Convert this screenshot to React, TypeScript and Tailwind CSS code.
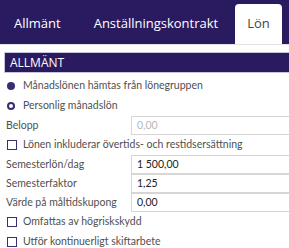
import { useState } from 'react';

const font = { fontFamily: '"Open Sans", "Noto Sans", sans-serif' };
const bodyFont = { fontFamily: 'Lato, "Open Sans", sans-serif' };

function Radio({ checked, label }: { checked: boolean; label: string }) {
  return (
    <div className="flex items-center h-[20px] pl-[7px] gap-[8px] whitespace-nowrap">
      {checked ? (
        <span className="shrink-0 w-[8px] h-[8px] rounded-full bg-[#3b2d72]" />
      ) : (
        <span className="shrink-0 w-[8px] h-[8px] rounded-full border-2 border-[#3b2d72]" />
      )}
      <span className="text-[10.5px] text-[#505050]">{label}</span>
    </div>
  );
}

function Check({ label }: { label: string }) {
  return (
    <div className="flex items-center h-[20px] pl-[7px] gap-[6px] whitespace-nowrap">
      <span className="shrink-0 w-[10px] h-[10px] border-[1.5px] border-[#3b2d72] bg-white" />
      <span className="text-[10.5px] text-[#505050]">{label}</span>
    </div>
  );
}

function Field({ label, value, disabled }: { label: string; value: string; disabled?: boolean }) {
  return (
    <div className="flex items-center h-[19px] whitespace-nowrap">
      <span className="w-[131px] shrink-0 pl-[6px] text-[10.5px] text-[#505050]">{label}</span>
      <div
        className={`w-[170px] shrink-0 h-[19px] border border-[#d6d6d6] flex items-center pl-[5px] text-[10.5px] ${
          disabled ? 'text-[#b8b8b8]' : 'text-[#222]'
        }`}
      >
        {value}
      </div>
    </div>
  );
}

export default function App() {
  const [tab] = useState('Lön');

  return (
    <div className="w-[289px] h-[248px] overflow-hidden bg-white" style={font}>
      <div className="h-[44px] bg-[#2a1b60] flex items-end whitespace-nowrap">
        <div className="h-[40px] flex items-center text-[13px] text-white pl-[14px]">Allmänt</div>
        <div className="h-[40px] flex items-center text-[13px] text-white ml-[33px]">Anställningskontrakt</div>
        <div
          className={`h-[40px] w-[47px] ml-auto mr-[7px] flex items-center justify-center text-[13px] rounded-t-[4px] ${
            tab === 'Lön' ? 'bg-white text-[#444]' : 'text-white'
          }`}
        >
          Lön
        </div>
      </div>
      <div className="h-[1px] bg-[#e2e2e2]" />
      <div className="mt-[7px] ml-[4px] border-l border-t border-[#c9c4dc]">
        <div className="h-[20px] bg-[#2a1b60] flex items-center pl-[5px] text-[12px] text-white border-b border-[#c9c4dc]">
          ALLMÄNT
        </div>
      </div>
      <div className="pt-[3px]" style={bodyFont}>
        <Radio checked label="Månadslönen hämtas från lönegruppen" />
        <Radio checked={false} label="Personlig månadslön" />
        <Field label="Belopp" value="0,00" disabled />
        <Check label="Lönen inkluderar övertids- och restidsersättning" />
        <div className="flex flex-col">
          <Field label="Semesterlön/dag" value="1 500,00" />
          <Field label="Semesterfaktor" value="1,25" />
          <Field label="Värde på måltidskupong" value="0,00" />
        </div>
        <Check label="Omfattas av högriskskydd" />
        <Check label="Utför kontinuerligt skiftarbete" />
      </div>
    </div>
  );
}
